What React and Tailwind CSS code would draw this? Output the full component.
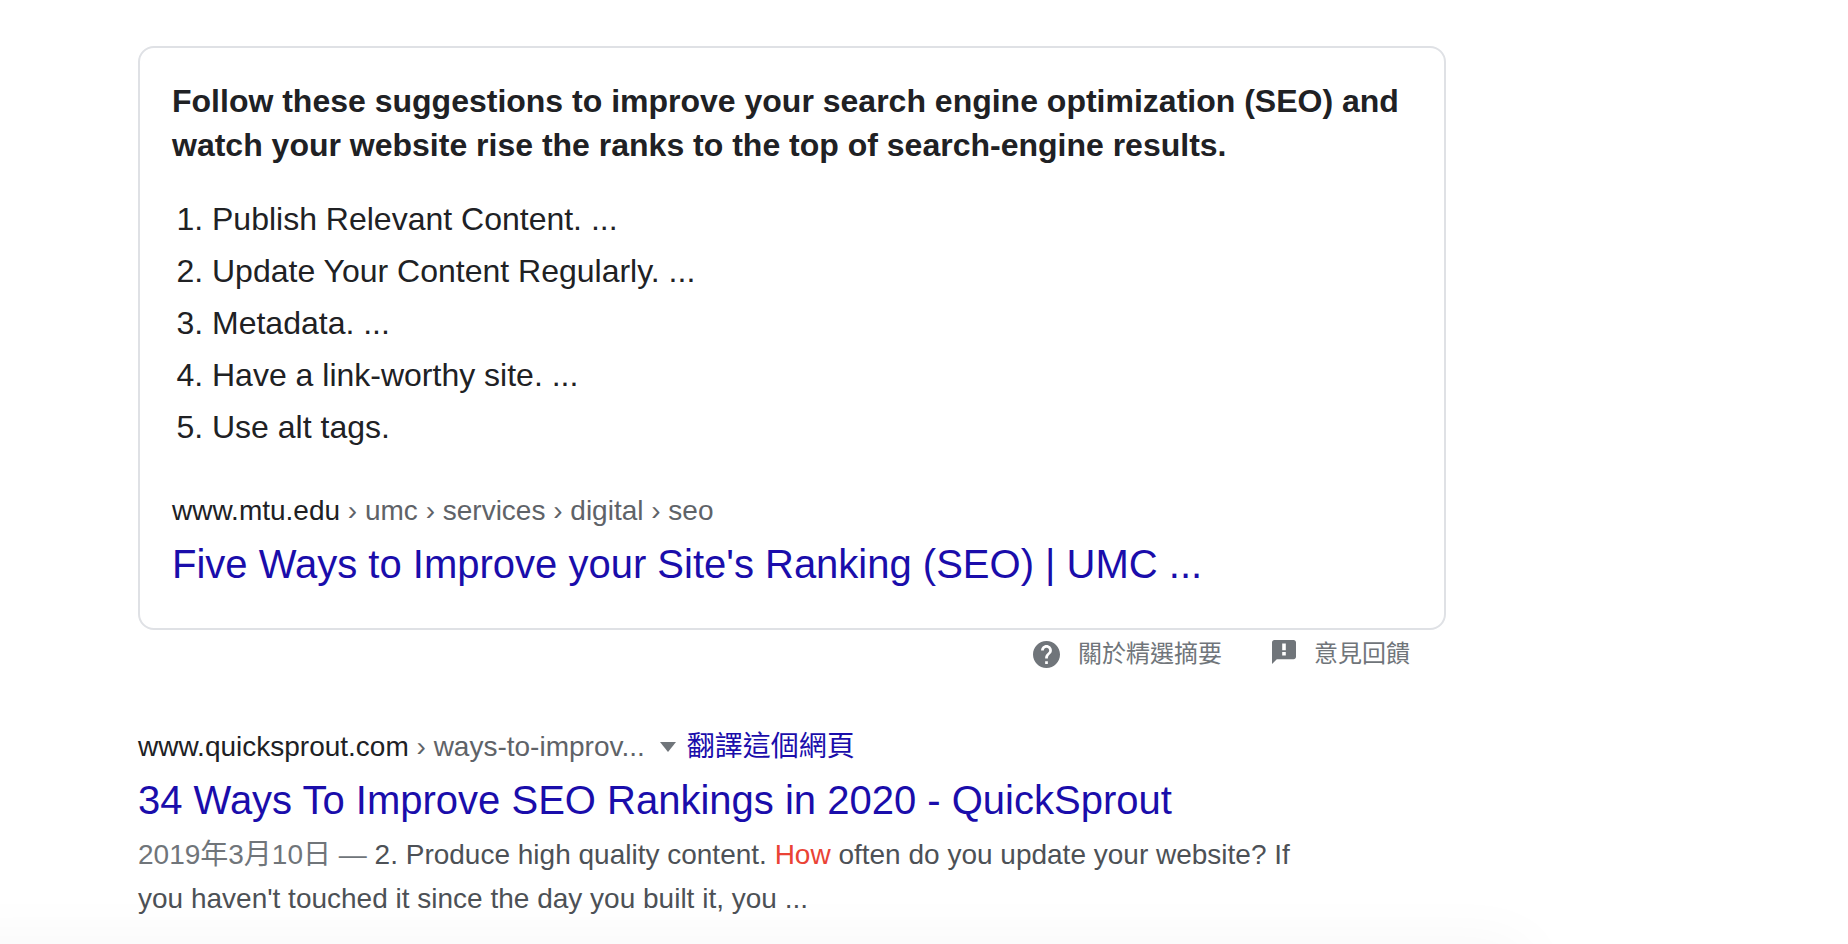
import React from 'react';

const steps = [
  'Publish Relevant Content. ...',
  'Update Your Content Regularly. ...',
  'Metadata. ...',
  'Have a link-worthy site. ...',
  'Use alt tags.',
];

function HelpIcon() {
  return (
    <svg viewBox="2 2 20 20" className="size-[27px] shrink-0" fill="currentColor" aria-hidden="true">
      <path d="M12 2C6.48 2 2 6.48 2 12s4.48 10 10 10 10-4.48 10-10S17.52 2 12 2zm1 17h-2v-2h2v2zm2.07-7.75l-.9.92C13.45 12.9 13 13.5 13 15h-2v-.5c0-1.1.45-2.1 1.17-2.83l1.24-1.26c.37-.36.59-.86.59-1.41 0-1.1-.9-2-2-2s-2 .9-2 2H8c0-2.21 1.79-4 4-4s4 1.79 4 4c0 .88-.36 1.68-.93 2.25z" />
    </svg>
  );
}

function FeedbackIcon() {
  return (
    <svg viewBox="2 2 20 20" className="mb-1 size-6 shrink-0" fill="currentColor" aria-hidden="true">
      <path d="M20 2H4c-1.1 0-1.99.9-1.99 2L2 22l4-4h14c1.1 0 2-.9 2-2V4c0-1.1-.9-2-2-2zm-6.5 13h-3v-3h3v3zm0-4.500h-3V5h3v5.500z" />
    </svg>
  );
}

function FeaturedSnippet() {
  return (
    <section>
      <div className="rounded-2xl border-2 border-[#dfe1e5] px-8 pt-[31px] pb-[38px]">
        <h2 className="text-[32px] leading-[44px] font-bold">
          Follow these suggestions to improve your search engine optimization (SEO) and watch your
          website rise the ranks to the top of search-engine results.
        </h2>
        <ol className="mt-[30px] list-decimal pl-10 text-[32px]">
          {steps.map((step) => (
            <li key={step} className="mb-2 leading-[44px]">
              {step}
            </li>
          ))}
        </ol>
        <a href="#umc" className="mt-11 block">
          <cite className="block text-[28px] leading-9 text-[#5f6368] not-italic">
            <span className="text-[#202124]">www.mtu.edu</span> › umc › services › digital › seo
          </cite>
          <h3 className="mt-[9px] text-[40px] leading-[52px] text-[#1a0dab]">
            Five Ways to Improve your Site's Ranking (SEO) | UMC ...
          </h3>
        </a>
      </div>
      <div className="flex justify-end gap-[50px] pt-1 pr-9 text-2xl leading-10 text-[#70757a]">
        <a href="#about" className="flex items-center gap-[18px]">
          <HelpIcon />
          關於精選摘要
        </a>
        <button type="button" className="flex items-center gap-[18px]">
          <FeedbackIcon />
          意見回饋
        </button>
      </div>
    </section>
  );
}

function SearchResult() {
  return (
    <section className="mt-[55px]">
      <div className="flex items-center text-[28px] leading-9">
        <a href="#quicksprout" className="text-[#5f6368]">
          <span className="text-[#202124]">www.quicksprout.com</span> › ways-to-improv...
        </a>
        <button type="button" aria-label="more" className="mr-[11px] ml-[15px] text-[#70757a]">
          <svg viewBox="0 0 16 10" className="h-[10px] w-4" fill="currentColor" aria-hidden="true">
            <path d="M0 0h16L8 10z" />
          </svg>
        </button>
        <a href="#translate" className="text-[#1a0dab]">
          翻譯這個網頁
        </a>
      </div>
      <h3 className="mt-[9px] text-[40px] leading-[52px] text-[#1a0dab]">
        <a href="#quicksprout">34 Ways To Improve SEO Rankings in 2020 - QuickSprout</a>
      </h3>
      <p className="mt-[7px] max-w-[1200px] text-[28px] leading-[44px] text-[#4d5156]">
        <span className="text-[#70757a]">2019年3月10日 — </span>
        2. Produce high quality content. <em className="text-[#ea4335] not-italic">How</em> often do
        you update your website? If you haven't touched it since the day you built it, you ...
      </p>
    </section>
  );
}

export default function App() {
  return (
    <div className="relative min-h-screen overflow-hidden bg-white font-['Liberation_Sans','Noto_Sans_CJK_TC',sans-serif] text-[#202124]">
      <main className="mr-8 ml-[138px] max-w-[1308px] pt-[46px]">
        <FeaturedSnippet />
        <SearchResult />
      </main>
      {/* shadow of the bar that starts under the fold */}
      <div className="absolute top-full -left-16 h-24 w-[86%] shadow-[0_0_64px_rgba(0,0,0,0.04)]" />
    </div>
  );
}
